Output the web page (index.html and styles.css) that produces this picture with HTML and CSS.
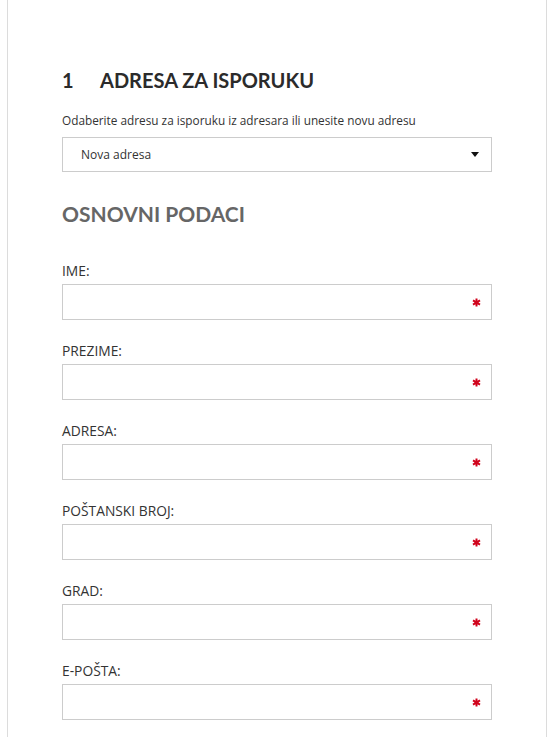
FILE: index.html
```html
<!DOCTYPE html>
<html lang="hr">
<head>
<meta charset="utf-8">
<title>Adresa za isporuku</title>
<link rel="stylesheet" href="styles.css">
</head>
<body>
<div class="card">
  <h2 class="step-title"><span class="step-num">1</span><span>ADRESA ZA ISPORUKU</span></h2>
  <p class="hint">Odaberite adresu za isporuku iz adresara ili unesite novu adresu</p>
  <div class="select">
    <span class="select-value">Nova adresa</span>
    <span class="caret"></span>
  </div>
  <h3 class="section-title">OSNOVNI PODACI</h3>
  <div class="fields">
    <div class="field">
      <label class="label">IME:</label>
      <div class="input"><svg class="req" viewBox="0 0 10 10"><path d="M5 0.5V9.5M1.1 2.75L8.9 7.25M8.9 2.75L1.1 7.25"/></svg></div>
    </div>
    <div class="field">
      <label class="label">PREZIME:</label>
      <div class="input"><svg class="req" viewBox="0 0 10 10"><path d="M5 0.5V9.5M1.1 2.75L8.9 7.25M8.9 2.75L1.1 7.25"/></svg></div>
    </div>
    <div class="field">
      <label class="label">ADRESA:</label>
      <div class="input"><svg class="req" viewBox="0 0 10 10"><path d="M5 0.5V9.5M1.1 2.75L8.9 7.25M8.9 2.75L1.1 7.25"/></svg></div>
    </div>
    <div class="field">
      <label class="label">POŠTANSKI BROJ:</label>
      <div class="input"><svg class="req" viewBox="0 0 10 10"><path d="M5 0.5V9.5M1.1 2.75L8.9 7.25M8.9 2.75L1.1 7.25"/></svg></div>
    </div>
    <div class="field">
      <label class="label">GRAD:</label>
      <div class="input"><svg class="req" viewBox="0 0 10 10"><path d="M5 0.5V9.5M1.1 2.75L8.9 7.25M8.9 2.75L1.1 7.25"/></svg></div>
    </div>
    <div class="field">
      <label class="label">E-POŠTA:</label>
      <div class="input"><svg class="req" viewBox="0 0 10 10"><path d="M5 0.5V9.5M1.1 2.75L8.9 7.25M8.9 2.75L1.1 7.25"/></svg></div>
    </div>
  </div>
</div>
</body>
</html>
```
FILE: styles.css
```css
html, body {
  margin: 0;
  padding: 0;
  background: #fff;
}
body {
  font-family: "Open Sans", "Liberation Sans", sans-serif;
  color: #333;
}
.card {
  margin-left: 7px;
  width: 540px;
  min-height: 737px;
  border-left: 1px solid #dcdcdc;
  border-right: 1px solid #dcdcdc;
  padding: 68px 0 0 54px;
  box-sizing: border-box;
}
.step-title {
  margin: 0;
  font-family: Lato, "Liberation Sans", sans-serif;
  font-size: 20px;
  line-height: 24px;
  font-weight: 700;
  color: #2b2b2b;
  display: flex;
}
.step-num {
  width: 38px;
}
.hint {
  margin: 20px 0 0;
  font-size: 11.8px;
  line-height: 16px;
  color: #333;
}
.select {
  margin-top: 9px;
  width: 430px;
  height: 35px;
  box-sizing: border-box;
  border: 1px solid #cccccc;
  display: flex;
  align-items: center;
  justify-content: space-between;
  padding: 0 12px 0 18px;
}
.select-value {
  font-size: 12px;
  color: #333;
}
.caret {
  width: 0;
  height: 0;
  border-left: 4px solid transparent;
  border-right: 4px solid transparent;
  border-top: 5px solid #111;
}
.section-title {
  margin: 29px 0 0;
  font-family: Lato, "Liberation Sans", sans-serif;
  font-size: 21px;
  line-height: 26px;
  font-weight: 700;
  color: #666;
}
.fields {
  margin-top: 37px;
  display: flex;
  flex-direction: column;
  gap: 24px;
}
.field {
  display: flex;
  flex-direction: column;
  gap: 6px;
}
.label {
  font-size: 13.8px;
  line-height: 14px;
  color: #333;
}
.input {
  width: 430px;
  height: 36px;
  box-sizing: border-box;
  border: 1px solid #cccccc;
  display: flex;
  align-items: center;
  justify-content: flex-end;
  padding-right: 10px;
}
.req {
  width: 9px;
  height: 9px;
  stroke: #d0021b;
  stroke-width: 2.2;
  fill: none;
}
```
